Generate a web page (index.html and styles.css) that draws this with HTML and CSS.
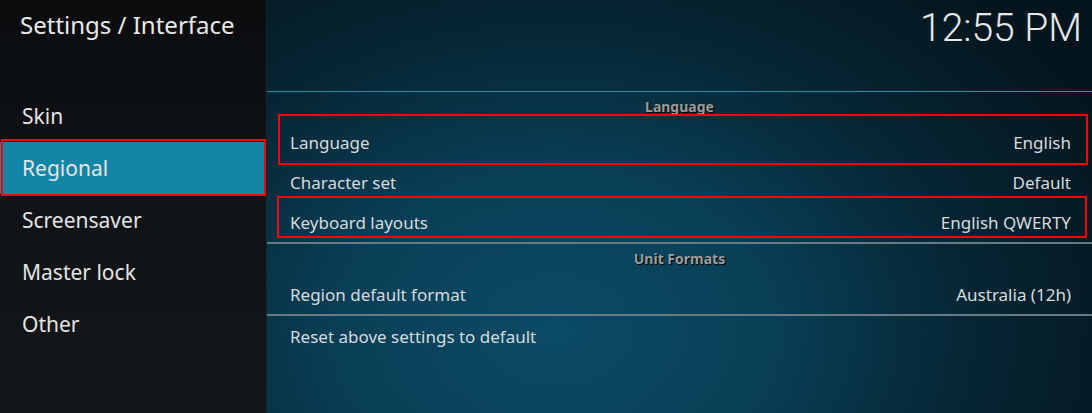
FILE: index.html
```html
<!DOCTYPE html>
<html lang="en">
<head>
  <meta charset="UTF-8">
  <title>Settings / Interface</title>
  <link rel="stylesheet" href="styles.css">
</head>
<body>
  <div class="pantalla">
    <div class="lateral">
      <h1>Settings / Interface</h1>
      <ul class="menu">
        <li>Skin</li>
        <li class="activo">Regional</li>
        <li>Screensaver</li>
        <li>Master lock</li>
        <li>Other</li>
      </ul>
    </div>

    <div class="principal">
      <div class="cabecera">
        <span class="reloj">12:55 PM</span>
      </div>

      <div class="lista">
        <div class="grupo">Language</div>
        <div class="fila marca-a"><span>Language</span><span>English</span></div>
        <div class="fila"><span>Character set</span><span>Default</span></div>
        <div class="fila marca-b"><span>Keyboard layouts</span><span>English QWERTY</span></div>

        <div class="separador"></div>
        <div class="grupo">Unit Formats</div>
        <div class="fila"><span>Region default format</span><span>Australia (12h)</span></div>

        <div class="separador"></div>
        <div class="fila"><span>Reset above settings to default</span></div>
      </div>
    </div>
  </div>
</body>
</html>
```

FILE: styles.css
```css
html, body {
  margin: 0;
  padding: 0;
}

body {
  font-family: 'Noto Sans', 'Open Sans', sans-serif;
  background-color: #000;
  width: 1092px;
  height: 413px;
  overflow: hidden;
}

.pantalla {
  display: flex;
  height: 413px;
}

/* Columna izquierda */
.lateral {
  width: 267px;
  flex-shrink: 0;
  background: linear-gradient(180deg, #0a0c0e 0%, #101316 45%, #131719 100%);
  border-right: 1px solid #16262c;
  box-sizing: border-box;
}

.lateral h1 {
  margin: 0;
  padding: 8px 0 0 20px;
  height: 82px;
  box-sizing: border-box;
  font-size: 24px;
  font-weight: normal;
  color: #e8e8e8;
}

.menu {
  list-style: none;
  margin: 8px 0 0;
  padding: 0;
}

.menu li {
  position: relative;
  height: 52px;
  line-height: 52px;
  padding-left: 22px;
  font-size: 21px;
  color: #e4e4e4;
}

.menu li.activo {
  background-color: #1286a6;
}

.menu li.activo::after {
  content: "";
  position: absolute;
  top: -3px;
  bottom: -2px;
  left: 1px;
  right: 0;
  border: 2px solid #ff0000;
}

/* Zona derecha */
.principal {
  flex: 1;
  background: radial-gradient(ellipse 75% 110% at 35% 80%, #0b4b66 0%, #093f56 35%, #062736 65%, #04151d 100%);
  color: #d6dbde;
}

.cabecera {
  height: 91px;
  display: flex;
  justify-content: flex-end;
  padding-right: 10px;
  box-sizing: border-box;
}

.reloj {
  font-family: 'Roboto Light', Roboto, 'Noto Sans', sans-serif;
  font-weight: 200;
  font-size: 39px;
  line-height: 56px;
  color: #e8e8e8;
}

.lista {
  border-top: 1px solid #2a8db0;
}

.grupo {
  height: 30px;
  line-height: 30px;
  text-align: center;
  font-size: 14px;
  font-weight: bold;
  color: #9c9c9c;
  text-shadow: 1px 1px 1px #000;
}

.fila {
  position: relative;
  height: 40px;
  display: flex;
  align-items: center;
  justify-content: space-between;
  padding: 0 21px 0 23px;
  font-size: 17px;
}

.separador {
  height: 2px;
  background-color: #6a7a82;
}

/* recuadros rojos */
.marca-a::after,
.marca-b::after {
  content: "";
  position: absolute;
  border: 2px solid #ff0000;
}

.marca-a::after {
  top: -8px;
  bottom: -3px;
  left: 11px;
  right: 4px;
}

.marca-b::after {
  top: -6px;
  bottom: 4px;
  left: 10px;
  right: 5px;
}
```
